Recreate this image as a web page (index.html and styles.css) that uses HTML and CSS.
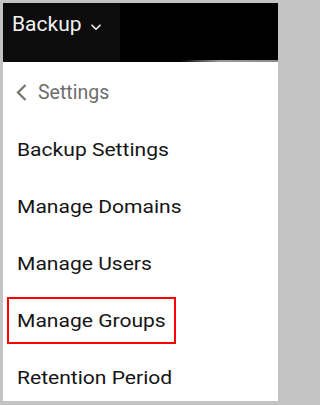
FILE: index.html
```html
<!DOCTYPE html>
<html lang="en">
<head>
<meta charset="utf-8">
<title>Backup Settings Menu</title>
<link rel="stylesheet" href="styles.css">
</head>
<body>
<div class="window">
  <header class="topbar">
    <div class="brand">
      <span class="brand-text">Backup</span>
      <svg class="caret" width="10" height="7" viewBox="0 0 10 7"><path d="M1 1.2 L5 5.2 L9 1.2" fill="none" stroke="#f2f2f2" stroke-width="1.6" stroke-linecap="round" stroke-linejoin="round"/></svg>
    </div>
    <div class="topbar-rest"></div>
  </header>
  <nav class="panel">
    <div class="back-row">
      <svg class="back-icon" width="11" height="17" viewBox="0 0 11 17"><path d="M9.5 1 L2 8.5 L9.5 16" fill="none" stroke="#71756e" stroke-width="2.2"/></svg>
      <span class="back-text">Settings</span>
    </div>
    <ul class="menu">
      <li class="menu-item"><span class="label"><span class="label-text">Backup Settings</span></span></li>
      <li class="menu-item"><span class="label"><span class="label-text">Manage Domains</span></span></li>
      <li class="menu-item"><span class="label"><span class="label-text">Manage Users</span></span></li>
      <li class="menu-item"><span class="label selected"><span class="label-text">Manage Groups</span></span></li>
      <li class="menu-item"><span class="label"><span class="label-text">Retention Period</span></span></li>
    </ul>
  </nav>
</div>
</body>
</html>
```

FILE: styles.css
```css
html, body {
  margin: 0;
  padding: 0;
}
body {
  background: #c3c3c3;
  width: 282px;
  height: 405px;
  overflow: hidden;
  font-family: Roboto, "Liberation Sans", sans-serif;
}
.window {
  margin: 3px 4px 4px 3px;
  height: 398px;
  background: #ffffff;
  overflow: hidden;
  display: flex;
  flex-direction: column;
}
.topbar {
  height: 59px;
  display: flex;
  flex-shrink: 0;
  background: #000;
}
.brand {
  width: 117px;
  background: #0c0c0c;
  padding: 9px 0 0 9px;
  box-sizing: border-box;
  display: flex;
  align-items: flex-start;
}
.brand-text {
  color: #f2f2f2;
  font-size: 21px;
  line-height: 25px;
}
.caret {
  margin: 12px 0 0 9px;
}
.topbar-rest {
  flex: 1;
  background: #000;
  position: relative;
}
.topbar-rest::after {
  content: "";
  position: absolute;
  left: 60px;
  right: 0;
  bottom: 0;
  height: 2px;
  background: linear-gradient(to right, rgba(150,150,150,0), #9a9a9a 40%, #8a8a8a);
}
.panel {
  flex: 1;
}
.back-row {
  height: 59px;
  display: flex;
  align-items: center;
  padding: 1px 0 0 13px;
  box-sizing: border-box;
}
.back-icon {
  margin-right: 11px;
}
.back-text {
  color: #6e6e6e;
  font-size: 19.5px;
}
.menu {
  list-style: none;
  margin: 0;
  padding: 0;
}
.menu-item {
  height: 57px;
  display: flex;
  align-items: center;
  padding-left: 4px;
}
.label {
  display: flex;
  align-items: center;
  height: 47px;
  width: 169px;
  box-sizing: border-box;
  border: 2px solid transparent;
  padding-left: 7.7px;
}
.label.selected {
  border-color: #ff0000;
}
.label-text {
  display: inline-block;
  color: #151515;
  font-size: 18px;
  white-space: nowrap;
  transform: scaleX(1.17);
  transform-origin: left center;
}
```
